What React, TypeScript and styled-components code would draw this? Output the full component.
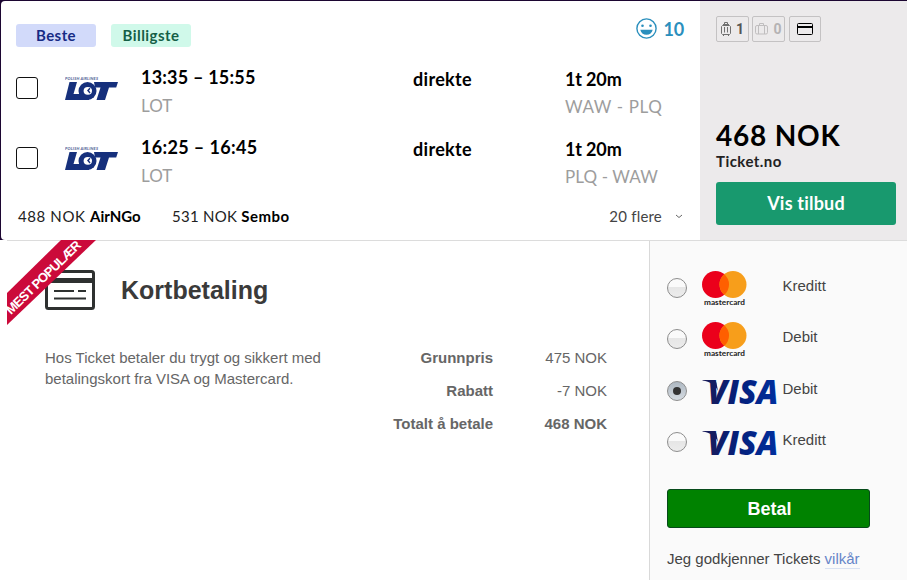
import React from "react";
import styled, { createGlobalStyle } from "styled-components";

const GlobalStyle = createGlobalStyle`
  * {
    box-sizing: border-box;
  }
  body {
    margin: 0;
    background: #fff;
    overflow: hidden;
  }
`;

const Page = styled.div`
  width: 907px;
  height: 580px;
  display: flex;
  flex-direction: column;
  background: #fff;
`;

/* ---------- flight offer ---------- */

const Offer = styled.section`
  display: flex;
  height: 240px;
  padding: 1px 0 0 1px;
  background: #1c0632;
  font-family: Lato, "Open Sans", sans-serif;
  color: #000;
`;

const OfferMain = styled.div`
  width: 699px;
  padding: 14px 15px 0;
  background: #fff;
  border-radius: 4px 0 0 4px;
`;

const OfferHeader = styled.div`
  display: flex;
  height: 50px;
  justify-content: space-between;
`;

const Tags = styled.div`
  display: flex;
  gap: 15px;
  padding-top: 9px;
`;

const Tag = styled.span<{ $bg: string; $color: string }>`
  width: 80px;
  height: 23px;
  line-height: 23px;
  border-radius: 3px;
  text-align: center;
  font-size: 15px;
  font-weight: 700;
  letter-spacing: 0.45px;
  background: ${(p) => p.$bg};
  color: ${(p) => p.$color};
`;

const Score = styled.div`
  display: flex;
  gap: 6px;
  padding: 3px 1px 0 0;
  font-size: 18px;
  font-weight: 700;
  line-height: 23px;
  letter-spacing: -0.2px;
  color: #2a8fbd;
`;

const Leg = styled.div`
  display: flex;
  height: 70px;
`;

const Checkbox = styled.span`
  width: 22px;
  height: 22px;
  margin-top: 12px;
  border: 1px solid #111;
  border-radius: 3px;
`;

const LogoBox = styled.div`
  width: 53px;
  margin: 11px 23px 0 27px;
`;

const LegColumn = styled.div<{ $width: number; $top?: number }>`
  width: ${(p) => p.$width}px;
  padding-top: ${(p) => p.$top || 0}px;
  white-space: nowrap;
`;

const Strong = styled.div<{ $spacing?: number }>`
  font-size: 18px;
  font-weight: 700;
  line-height: 24px;
  letter-spacing: ${(p) => p.$spacing || 0}px;
`;

const Muted = styled.div<{ $spacing?: number; $top?: number }>`
  padding-top: ${(p) => p.$top ?? 4}px;
  font-size: 17px;
  line-height: 25px;
  font-weight: 400;
  letter-spacing: ${(p) => p.$spacing || 0}px;
  color: #9d9d9d;
`;

const OfferFooter = styled.div`
  display: flex;
  padding: 0 2px;
  font-size: 15px;
  line-height: 22px;
  white-space: nowrap;
`;

const Agent = styled.span<{ $width: number; $spacing: number; $nameSpacing: number }>`
  width: ${(p) => p.$width}px;
  letter-spacing: ${(p) => p.$spacing}px;
  color: #222;
  b {
    letter-spacing: ${(p) => p.$nameSpacing}px;
    color: #000;
  }
`;

const More = styled.span`
  display: flex;
  align-items: center;
  margin-left: auto;
  gap: 13px;
  line-height: 20px;
  letter-spacing: 0.2px;
  color: #444;
`;

const OfferSide = styled.aside`
  flex: 1;
  padding: 15px 11px 0 16px;
  background: #eceaeb;
`;

const Badges = styled.div`
  display: flex;
  height: 104px;
`;

const Badge = styled.span<{ $faded?: boolean; $gap?: number; $width?: number }>`
  display: flex;
  align-items: center;
  justify-content: center;
  gap: 5px;
  width: ${(p) => p.$width || 33}px;
  height: 26px;
  margin-right: ${(p) => p.$gap || 0}px;
  border: 1px solid #c4c2c3;
  border-radius: 2px;
  font-family: Roboto, sans-serif;
  font-size: 14px;
  font-weight: 700;
  line-height: 24px;
  color: ${(p) => (p.$faded ? "#b5b3b4" : "#555")};
  svg {
    flex-shrink: 0;
  }
`;

const Price = styled.div`
  font-size: 28px;
  font-weight: 700;
  line-height: 30px;
  letter-spacing: 0.8px;
  white-space: nowrap;
`;

const Seller = styled.div`
  font-size: 15px;
  font-weight: 700;
  line-height: 22px;
  letter-spacing: 0.45px;
  color: #222;
`;

const OfferButton = styled.button`
  display: block;
  width: 180px;
  height: 43px;
  margin-top: 10px;
  padding: 0;
  border: 0;
  border-radius: 3px;
  background: #18996e;
  color: #fff;
  font: 700 18px/43px Lato, sans-serif;
  letter-spacing: 0.2px;
`;

/* ---------- payment ---------- */

const Payment = styled.section`
  display: flex;
  flex: 1;
  margin-left: 7px;
  border-top: 1px solid #dcdcdc;
  font-family: "Liberation Sans", Arial, sans-serif;
  font-size: 15px;
  color: #666;
`;

const PaymentMain = styled.div`
  position: relative;
  width: 642px;
  padding: 28px 42px 0 38px;
`;

const Ribbon = styled.svg`
  position: absolute;
  top: -1px;
  left: 0;
  overflow: visible;
`;

const Heading = styled.h1`
  display: flex;
  align-items: center;
  gap: 26px;
  height: 42px;
  margin: 0 0 34px;
  font-size: 25px;
  line-height: 42px;
  color: #3a3a3a;
`;

const Details = styled.div`
  display: flex;
  justify-content: space-between;
`;

const Intro = styled.p`
  width: 290px;
  margin: 2px 0 0;
  line-height: 21px;
`;

const Prices = styled.dl`
  display: grid;
  grid-template-columns: 110px 114px;
  margin: -4px 0 0;
  line-height: 33px;
  text-align: right;
`;

const PriceLabel = styled.dt`
  font-weight: 700;
`;

const PriceValue = styled.dd<{ $total?: boolean }>`
  margin: 0;
  font-weight: ${(p) => (p.$total ? 700 : 400)};
`;

const PaymentSide = styled.aside`
  flex: 1;
  padding: 21px 0 0 17px;
  border-left: 1px solid #d9d9d9;
  background: #fafafa;
  color: #444;
`;

const Option = styled.label`
  display: flex;
  height: 51.3px;
`;

const Radio = styled.span<{ $checked?: boolean }>`
  display: flex;
  align-items: center;
  justify-content: center;
  width: 20px;
  height: 20px;
  margin: 16px 15px 0 0;
  border: 1px solid #8d8d8d;
  border-radius: 50%;
  background: ${(p) =>
    p.$checked
      ? "linear-gradient(#aeb8c2, #d5dbe1)"
      : "linear-gradient(#fafafa 45%, #e6e6e6 46%, #ececec)"};
  &::after {
    content: "";
    width: 8px;
    height: 8px;
    border-radius: 50%;
    background: ${(p) => (p.$checked ? "#333" : "transparent")};
  }
`;

const Brand = styled.span`
  width: 80.5px;
  padding-top: 9px;
  svg {
    display: block;
    overflow: visible;
  }
`;

const OptionLabel = styled.span`
  padding-top: 15px;
  line-height: 18px;
`;

const PayButton = styled.button`
  display: block;
  width: 203px;
  height: 39px;
  margin: 22px 0 21px;
  padding: 0 0 0 2px;
  border: 1px solid #064a1a;
  border-radius: 3px;
  background: #008200;
  color: #fff;
  font: 700 18px/36px "Liberation Sans", Arial, sans-serif;
`;

const Terms = styled.div`
  line-height: 20px;
  a {
    display: inline-block;
    line-height: 18px;
    border-bottom: 1px solid #d9e2f2;
    color: #6585c8;
  }
`;

const LotLogo = () => (
  <svg width="53" height="26" viewBox="0 0 53 26" display="block">
    <text x="0" y="4" fontSize="4" fontWeight="900" fontFamily="Lato, sans-serif" fontStyle="italic" fill="#5c6a9a" textLength="33">
      POLISH AIRLINES
    </text>
    <g fill="#16307c">
      <path d="M4.500 6H12L8.500 18H15l4 6H0z" />
      <path d="M29 6h24l-1.800 5.500H44L40 24h-8.500l4-12.500H30z" />
      <ellipse cx="22.500" cy="15" rx="9" ry="9" />
      <path d="M10 19.500h14V24H9z" />
    </g>
    <ellipse cx="22.800" cy="14.800" rx="4.200" ry="3.900" fill="#fff" />
    <path d="M24.500 11.800l-2.500 2.700 2.500 3 1-1-1.500-2 1.500-1.700z" fill="#16307c" />
  </svg>
);

const Smiley = () => (
  <svg width="22" height="22" viewBox="0 0 22 22" fill="none" stroke="#2a8fbd">
    <circle cx="10.500" cy="10.500" r="9.600" strokeWidth="1.400" />
    <path d="M4.300 11.700h12.400c-.6 3-2.900 5-6.200 5s-5.600-2-6.200-5z" fill="#2a8fbd" stroke="none" />
    <circle cx="6.500" cy="7.700" r="1.300" fill="#2a8fbd" stroke="none" />
    <circle cx="14.500" cy="7.700" r="1.300" fill="#2a8fbd" stroke="none" />
  </svg>
);

const Trolley = () => (
  <svg width="10" height="14" viewBox="0 0 10 14" fill="none" stroke="#707070">
    <path d="M3.500 3V.500h3V3M2 2.500h6M1.500 3.500h7l1 1v7l-1 1h-7l-1-1v-7zM3.500 5v5.500M6.500 5v5.500M2.500 12.500V14M7.500 12.500V14" />
  </svg>
);

const Suitcase = () => (
  <svg width="13" height="12" viewBox="0 0 13 12" fill="none" stroke="#c0bebf">
    <rect x=".5" y="2.500" width="12" height="8.500" rx="1.500" />
    <path d="M4.500 2.500v-2h4v2M3.500 2.500V11M9.500 2.500V11" />
  </svg>
);

const SmallCard = () => (
  <svg width="16" height="12" viewBox="0 0 16 12" fill="none" stroke="#000">
    <rect x=".5" y=".5" width="15" height="11" rx="1" />
    <path d="M1 4h14" strokeWidth="2" />
  </svg>
);

const Chevron = () => (
  <svg width="8" height="5" viewBox="0 0 8 5" fill="none" stroke="#666">
    <path d="M1 1l3 2.500L7 1" />
  </svg>
);

const CreditCard = () => (
  <svg width="50" height="42" viewBox="0 0 50 42" fill="none" stroke="#2e3130">
    <rect x="1.500" y="2.500" width="47" height="37" rx="2" strokeWidth="3" />
    <path d="M2 11.500h46" strokeWidth="5" />
    <path d="M9 22h20M33 22h8M9 29.500h32" strokeWidth="2" />
  </svg>
);

const Mastercard = () => (
  <svg width="46" height="38" viewBox="0 0 46 38">
    <circle cx="13.500" cy="13.500" r="13.500" fill="#eb001b" />
    <circle cx="31" cy="13.500" r="13.500" fill="#f79e1b" />
    <path d="M22.250 3.200a13.500 13.500 0 0 1 0 20.600 13.500 13.500 0 0 1 0-20.600z" fill="#ff5f00" />
    <text x="2" y="33.500" fontFamily="Lato, sans-serif" fontSize="7.800" fontWeight="700" fill="#222" textLength="41" lengthAdjust="spacingAndGlyphs">
      mastercard
    </text>
  </svg>
);

const Visa = ({ id }: { id: string }) => (
  <svg width="78" height="40" viewBox="0 0 78 40">
    <defs>
      <linearGradient id={id} x1="0" y1="0" x2="76" y2="0" gradientUnits="userSpaceOnUse">
        <stop offset="0" stopColor="#1a1a57" />
        <stop offset=".5" stopColor="#04207c" />
        <stop offset="1" stopColor="#002f9f" />
      </linearGradient>
    </defs>
    <path d="M.5 6h10.500c2 0 3 1 3.500 3l1.500 8C13.500 11 8 7.500.5 6.500z" fill={`url(#${id})`} />
    <text
      x="5.500"
      y="29.700"
      fontFamily="Open Sans, sans-serif"
      fontSize="33"
      fontWeight="800"
      fontStyle="italic"
      fill={`url(#${id})`}
      textLength="71"
      lengthAdjust="spacingAndGlyphs"
    >
      VISA
    </text>
  </svg>
);

const legs = [
  { time: "13:35 – 15:55", timeSpacing: 0.2, route: "WAW - PLQ", routeSpacing: 0.6 },
  { time: "16:25 – 16:45", timeSpacing: 0.35, route: "PLQ - WAW", routeSpacing: 0.1 },
];

const options = [
  { brand: "mastercard", label: "Kreditt" },
  { brand: "mastercard", label: "Debit" },
  { brand: "visa", label: "Debit", checked: true },
  { brand: "visa", label: "Kreditt" },
];

const FlightOffer = () => (
  <Offer>
    <OfferMain>
      <OfferHeader>
        <Tags>
          <Tag $bg="#d2dafa" $color="#172b85">Beste</Tag>
          <Tag $bg="#d0f9ea" $color="#155f46">Billigste</Tag>
        </Tags>
        <Score>
          <Smiley />
          10
        </Score>
      </OfferHeader>
      {legs.map((leg) => (
        <Leg key={leg.time}>
          <Checkbox />
          <LogoBox>
            <LotLogo />
          </LogoBox>
          <LegColumn $width={272}>
            <Strong $spacing={leg.timeSpacing}>{leg.time}</Strong>
            <Muted>LOT</Muted>
          </LegColumn>
          <LegColumn $width={152} $top={2}>
            <Strong $spacing={0.3}>direkte</Strong>
          </LegColumn>
          <LegColumn $width={100} $top={2}>
            <Strong $spacing={-0.15}>1t 20m</Strong>
            <Muted $top={3} $spacing={leg.routeSpacing}>
              {leg.route}
            </Muted>
          </LegColumn>
        </Leg>
      ))}
      <OfferFooter>
        <Agent $width={154} $spacing={0.6} $nameSpacing={0}>
          488 NOK <b>AirNGo</b>
        </Agent>
        <Agent $width={130} $spacing={0.25} $nameSpacing={0.5}>
          531 NOK <b>Sembo</b>
        </Agent>
        <More>
          20 flere
          <Chevron />
        </More>
      </OfferFooter>
    </OfferMain>
    <OfferSide>
      <Badges>
        <Badge $gap={3}>
          <Trolley />1
        </Badge>
        <Badge $faded $gap={4}>
          <Suitcase />0
        </Badge>
        <Badge $width={32}>
          <SmallCard />
        </Badge>
      </Badges>
      <Price>468 NOK</Price>
      <Seller>Ticket.no</Seller>
      <OfferButton>Vis tilbud</OfferButton>
    </OfferSide>
  </Offer>
);

const CardPayment = () => (
  <Payment>
    <PaymentMain>
      <Heading>
        <CreditCard />
        Kortbetaling
      </Heading>
      <Ribbon width="94" height="86" viewBox="0 0 94 86">
        <path d="M54 0h35L0 85V53z" fill="#cb0a3a" />
        <text
          transform="translate(4 75) rotate(-44.200)"
          fontFamily="Liberation Sans, sans-serif"
          fontSize="13"
          fontWeight="700"
          fill="#fff"
          textLength="99"
        >
          MEST POPULÆR
        </text>
      </Ribbon>
      <Details>
        <Intro>Hos Ticket betaler du trygt og sikkert med betalingskort fra VISA og Mastercard.</Intro>
        <Prices>
          <PriceLabel>Grunnpris</PriceLabel>
          <PriceValue>475 NOK</PriceValue>
          <PriceLabel>Rabatt</PriceLabel>
          <PriceValue>-7 NOK</PriceValue>
          <PriceLabel>Totalt å betale</PriceLabel>
          <PriceValue $total>468 NOK</PriceValue>
        </Prices>
      </Details>
    </PaymentMain>
    <PaymentSide>
      {options.map((option, i) => (
        <Option key={i}>
          <Radio $checked={option.checked} />
          <Brand>{option.brand === "visa" ? <Visa id={`visa-${i}`} /> : <Mastercard />}</Brand>
          <OptionLabel>{option.label}</OptionLabel>
        </Option>
      ))}
      <PayButton>Betal</PayButton>
      <Terms>
        Jeg godkjenner Tickets <a>vilkår</a>
      </Terms>
    </PaymentSide>
  </Payment>
);

const App = () => {
  return (
    <Page>
      <GlobalStyle />
      <FlightOffer />
      <CardPayment />
    </Page>
  );
};

export default App;
